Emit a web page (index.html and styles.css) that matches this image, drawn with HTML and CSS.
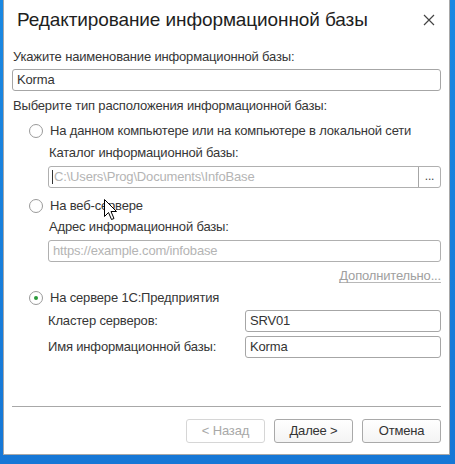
FILE: index.html
```html
<!DOCTYPE html>
<html lang="ru">
<head>
<meta charset="utf-8">
<title>Редактирование информационной базы</title>
<link rel="stylesheet" href="styles.css">
</head>
<body>
<div class="dialog">
  <div class="titlebar">
    <div class="title">Редактирование информационной базы</div>
    <svg class="close" width="12" height="12" viewBox="0 0 12 12"><path d="M1 1L11 11M11 1L1 11" stroke="#444" stroke-width="1.2"/></svg>
  </div>
  <div class="content">
    <div class="label l-name">Укажите наименование информационной базы:</div>
    <div class="field f-name">Korma</div>
    <div class="label l-type">Выберите тип расположения информационной базы:</div>
    <div class="radio r1"><span class="circle"></span><span>На данном компьютере или на компьютере в локальной сети</span></div>
    <div class="label sub l-cat">Каталог информационной базы:</div>
    <div class="field sub f-cat disabled"><span class="caret"></span><span class="ftext">C:\Users\Prog\Documents\InfoBase</span><span class="dots">...</span></div>
    <div class="radio r2"><span class="circle"></span><span>На веб-сервере</span></div>
    <div class="label sub l-addr">Адрес информационной базы:</div>
    <div class="field sub f-addr disabled">https://example.com/infobase</div>
    <div class="more"><span>Дополнительно...</span></div>
    <div class="radio r3"><span class="circle checked"></span><span>На сервере 1С:Предприятия</span></div>
    <div class="pair p1"><span class="plabel">Кластер серверов:</span><div class="field f-short">SRV01</div></div>
    <div class="pair p2"><span class="plabel">Имя информационной базы:</span><div class="field f-short">Korma</div></div>
    <div class="spacer"></div>
    <div class="sep"></div>
    <div class="buttons">
      <div class="btn disabled">&lt; Назад</div>
      <div class="btn">Далее &gt;</div>
      <div class="btn">Отмена</div>
    </div>
  </div>
  <svg class="cursor" width="14" height="22" viewBox="0 0 14 22"><path d="M0.5 0.5V17.5L4.5 13.5L7.5 20.5L10 19.5L7 12.5H12.5Z" fill="#fff" stroke="#000" stroke-width="1" stroke-linejoin="round"/></svg>
</div>
</body>
</html>
```
FILE: styles.css
```css
html, body {
  margin: 0;
  padding: 0;
}
body {
  width: 455px;
  height: 464px;
  background: linear-gradient(180deg, #1a88e2 0%, #1677d6 100%);
  font-family: "Liberation Sans", Arial, sans-serif;
  font-size: 13px;
  letter-spacing: -0.17px;
  color: #363636;
  overflow: hidden;
  padding-left: 3px;
  box-sizing: border-box;
}
.dialog {
  position: relative;
  width: 447px;
  height: 455px;
  background: #fff;
  border: 1px solid #a8a8a8;
  border-top: none;
  box-sizing: border-box;
  display: flex;
  flex-direction: column;
}
.titlebar {
  height: 40px;
  display: flex;
  align-items: center;
  justify-content: space-between;
  padding: 0 14px 0 13px;
}
.title {
  font-size: 19px;
  letter-spacing: -0.1px;
  color: #1e1e1e;
}
.close {
  display: block;
}
.content {
  flex: 1;
  display: flex;
  flex-direction: column;
  padding: 0 8px 11px 8px;
}
.label, .radio, .more, .pair {
  line-height: 16px;
}
.label {
  padding-left: 1px;
}
.sub {
  margin-left: 36px;
}
.field {
  height: 22px;
  box-sizing: border-box;
  border: 1px solid #a6a6a6;
  border-radius: 3px;
  padding: 0 4px;
  line-height: 20px;
  color: #333;
  display: flex;
  align-items: center;
}
.field.disabled {
  color: #b4b4b4;
  border-color: #b0b0b0;
}
.l-name { margin-top: 9px; }
.f-name { margin-top: 4px; }
.l-type { margin-top: 7px; }
.r1 { margin-top: 9px; }
.l-cat { margin-top: 6px; }
.f-cat { margin-top: 5px; padding: 0 0 0 3px; }
.r2 { margin-top: 10px; }
.l-addr { margin-top: 5px; }
.f-addr { margin-top: 5px; }
.more { margin-top: 6px; text-align: right; }
.r3 { margin-top: 6px; }
.p1 { margin-top: 4px; }
.p2 { margin-top: 4px; }
.caret {
  width: 1px;
  height: 14px;
  background: #333;
  margin-right: 1px;
}
.ftext {
  flex: 1;
}
.dots {
  width: 21px;
  height: 20px;
  border-left: 1px solid #a6a6a6;
  color: #444;
  text-align: center;
  line-height: 18px;
  font-size: 12px;
}
.more span {
  color: #a0a0a0;
  border-bottom: 1px solid #b8b8b8;
  line-height: 13px;
  display: inline-block;
}
.radio {
  display: flex;
  align-items: center;
  margin-left: 17px;
  gap: 7px;
}
.circle {
  width: 14px;
  height: 14px;
  box-sizing: border-box;
  border: 1px solid #9a9a9a;
  border-radius: 50%;
  position: relative;
  background: #fff;
}
.circle.checked::after {
  content: "";
  position: absolute;
  left: 4px;
  top: 4px;
  width: 4px;
  height: 4px;
  border-radius: 50%;
  background: #2a9a3a;
}
.pair {
  display: flex;
  align-items: center;
  margin-left: 36px;
}
.plabel {
  width: 197px;
}
.f-short {
  flex: 1;
}
.spacer {
  flex: 1;
}
.sep {
  height: 1px;
  background: #a8a8a8;
}
.buttons {
  margin-top: 12px;
  display: flex;
  justify-content: flex-end;
  gap: 9px;
}
.btn {
  width: 79px;
  height: 24px;
  box-sizing: border-box;
  border: 1px solid #a9a9a9;
  border-radius: 3px;
  background: linear-gradient(180deg, #ffffff 0%, #f4f4f4 100%);
  text-align: center;
  line-height: 22px;
  color: #333;
}
.btn.disabled {
  border-color: #d6d6d6;
  color: #a8a8a8;
  background: #fff;
}
.cursor {
  position: absolute;
  left: 100px;
  top: 199px;
}
```
